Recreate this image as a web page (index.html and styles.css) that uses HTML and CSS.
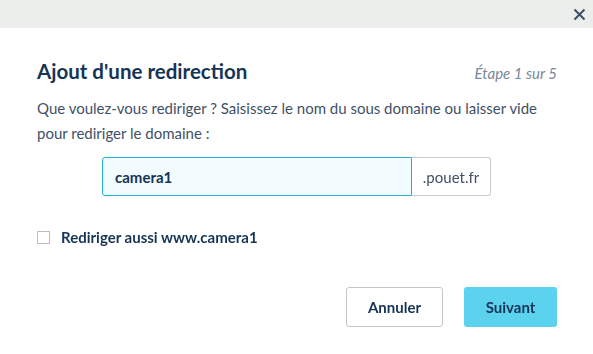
FILE: index.html
```html
<!DOCTYPE html>
<html lang="fr">
<head>
    <meta charset="UTF-8">
    <meta name="viewport" content="width=device-width, initial-scale=1.0">
    <title>Ajout d'une redirection</title>
    <link rel="stylesheet" href="styles.css">
</head>
<body>
<div class="modal">
    <div class="modal_top">
        <button class="close_btn" aria-label="Fermer">
            <svg width="13" height="13" viewBox="0 0 13 13">
                <path d="M1.5 1.5 L11.5 11.5 M11.5 1.5 L1.5 11.5" stroke="#3b4f66" stroke-width="2" fill="none"/>
            </svg>
        </button>
    </div>
    <div class="modal_body">
        <div class="modal_head">
            <h2 class="title">Ajout d'une redirection</h2>
            <span class="step">Étape 1 sur 5</span>
        </div>
        <p class="question">Que voulez-vous rediriger ? Saisissez le nom du sous domaine ou laisser vide pour rediriger le domaine :</p>
        <div class="input_group">
            <input id="subdomain" class="sub_input" type="text" value="camera1" autofocus>
            <span class="addon">.pouet.fr</span>
        </div>
        <label class="check_row">
            <span class="checkbox"></span>
            <span class="check_label">Rediriger aussi www.camera1</span>
        </label>
        <div class="actions">
            <button class="btn btn_cancel">Annuler</button>
            <button class="btn btn_next">Suivant</button>
        </div>
    </div>
</div>
<script>
    // put the caret at the end of the typed value
    window.addEventListener('load', function () {
        let input = document.getElementById('subdomain');
        input.focus();
        input.setSelectionRange(input.value.length, input.value.length);
    });
</script>
</body>
</html>
```

FILE: styles.css
```css
body, html {
    margin: 0;
    padding: 0;
    background: #ffffff;
    font-family: "Lato", "Open Sans", sans-serif;
}
.modal {
    width: 593px;
    height: 354px;
    background: #ffffff;
}
.modal_top {
    height: 28px;
    background-color: #eceeeb;
    display: flex;
    justify-content: flex-end;
    align-items: center;
}
.close_btn {
    background: none;
    border: none;
    padding: 0;
    margin-right: 7px;
    width: 13px;
    height: 13px;
    display: flex;
    cursor: pointer;
}
.modal_body {
    padding: 0 36px 0 37px;
}
.modal_head {
    display: flex;
    justify-content: space-between;
    align-items: baseline;
    margin-top: 30px;
}
.title {
    margin: 0;
    font-size: 20.5px;
    font-weight: 700;
    color: #163456;
    line-height: 26px;
}
.step {
    font-style: italic;
    font-size: 15px;
    color: #7a8799;
}
.question {
    margin: 12px 0 0 0;
    font-size: 15px;
    line-height: 25px;
    color: #3f5166;
}
.input_group {
    display: flex;
    margin: 11px 0 0 65px;
    width: 389px;
    height: 39px;
}
.sub_input {
    flex: 1;
    box-sizing: border-box;
    height: 39px;
    border: 1px solid #23b2cf;
    border-radius: 3px 0 0 3px;
    background-color: #f2fbfd;
    padding: 0 12px;
    font-family: inherit;
    font-size: 15px;
    font-weight: 700;
    color: #163456;
    caret-color: #163456;
    outline: none;
}
.addon {
    box-sizing: border-box;
    width: 79px;
    display: flex;
    align-items: center;
    justify-content: center;
    border: 1px solid #c9cccf;
    border-left: none;
    border-radius: 0 3px 3px 0;
    font-size: 15px;
    color: #3f5166;
}
.check_row {
    display: flex;
    align-items: center;
    margin-top: 32px;
    cursor: pointer;
}
.checkbox {
    box-sizing: border-box;
    width: 13px;
    height: 13px;
    border: 1px solid #b8bec5;
    background: #ffffff;
    margin-right: 11px;
}
.check_label {
    font-size: 15px;
    font-weight: 700;
    color: #163456;
}
.actions {
    display: flex;
    justify-content: flex-end;
    gap: 21px;
    margin-top: 41px;
}
.btn {
    height: 40px;
    border-radius: 3px;
    font-family: inherit;
    font-size: 15px;
    font-weight: 700;
    color: #163456;
    cursor: pointer;
}
.btn_cancel {
    width: 97px;
    background: #ffffff;
    border: 1px solid #c2c5c9;
}
.btn_next {
    width: 93px;
    background-color: #5bd3ee;
    border: none;
}
```
